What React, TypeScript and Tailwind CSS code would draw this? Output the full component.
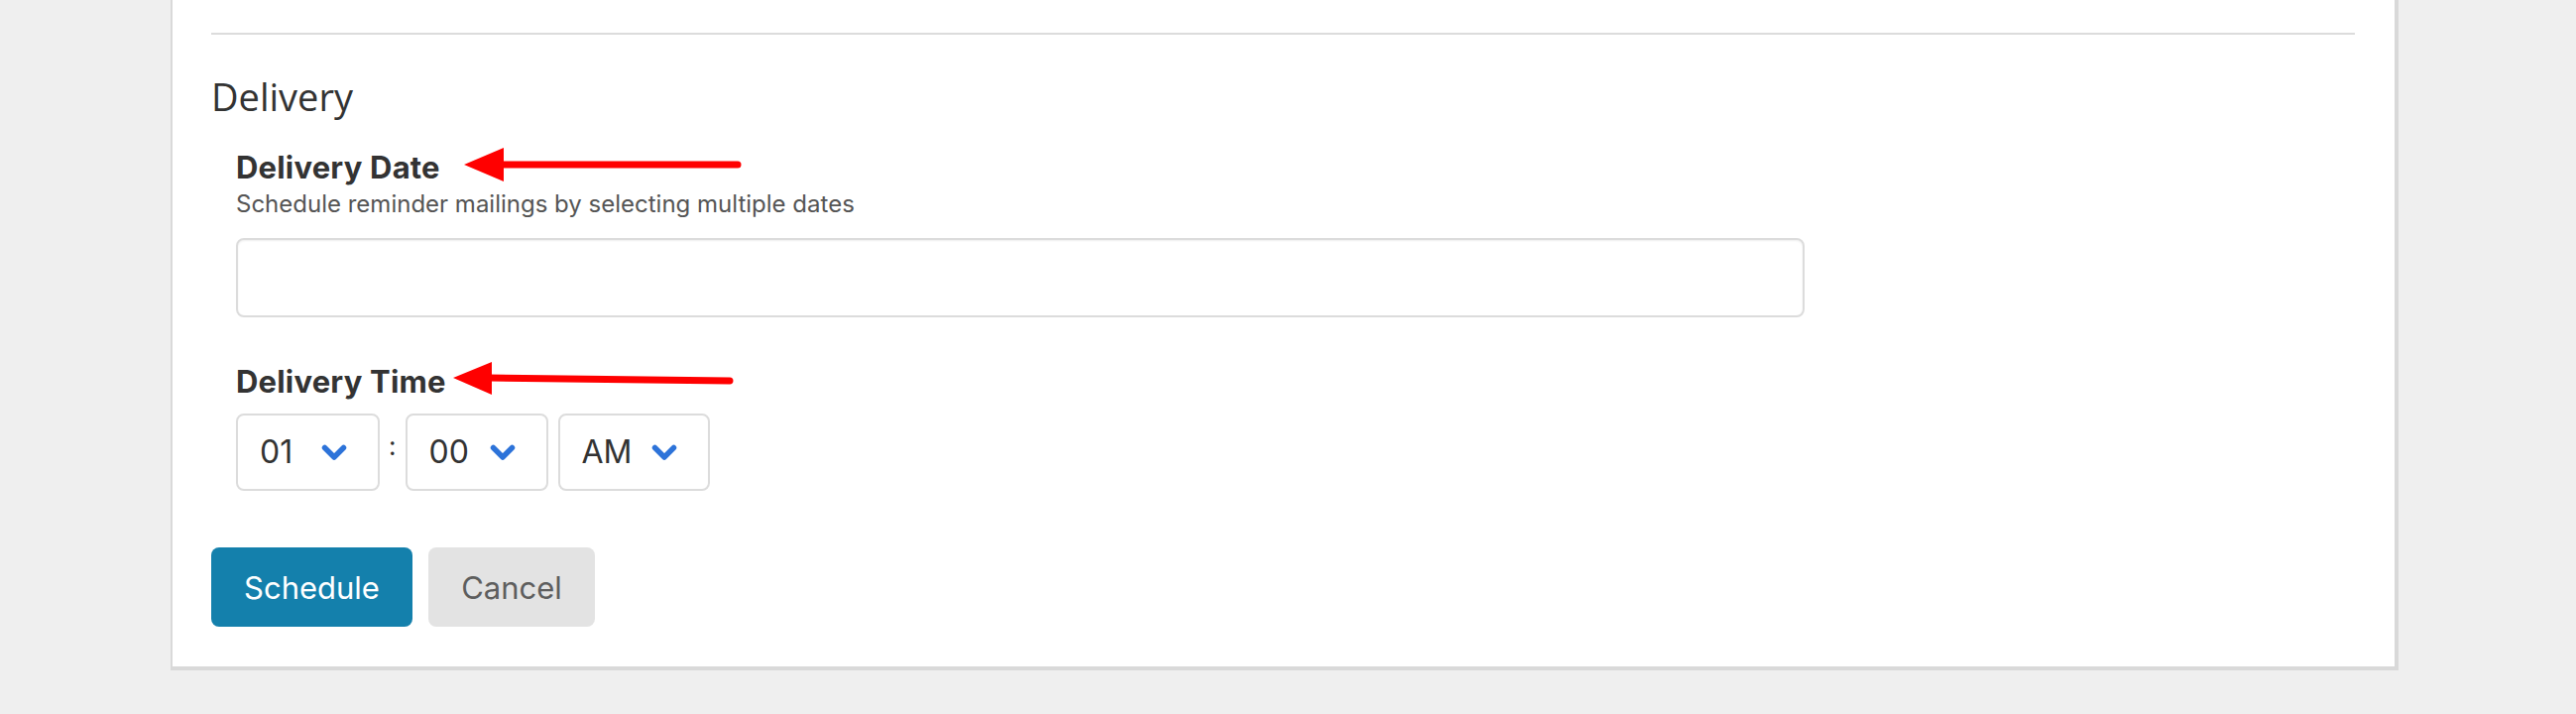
import React from "react";

const labelFont = { fontFamily: "Inter, 'Liberation Sans', sans-serif" };

function Chevron() {
  return (
    <svg width="26" height="17" viewBox="0 0 26 17" fill="none" className="shrink-0">
      <polyline
        points="3.5,3.5 13,13 22.5,3.5"
        stroke="#2d73d9"
        strokeWidth="5.5"
        strokeLinecap="round"
        strokeLinejoin="round"
      />
    </svg>
  );
}

function TimeSelect({ value, width }: { value: string; width: string }) {
  return (
    <div
      className={`flex h-[78px] items-center justify-between rounded-[8px] border-2 border-[#dcdcdc] bg-white pl-[22px] pr-[31px] text-[32px] leading-none text-[#333] ${width}`}
    >
      <span>{value}</span>
      <Chevron />
    </div>
  );
}

function Arrows() {
  return (
    <svg
      className="pointer-events-none absolute left-0 top-0"
      width="2598"
      height="720"
      viewBox="0 0 2598 720"
    >
      {/* delivery date arrow */}
      <line x1="505" y1="166" x2="744" y2="166" stroke="#ff0000" strokeWidth="7" strokeLinecap="round" />
      <polygon points="468,166 508,149 508,183" fill="#ff0000" />
      {/* delivery time arrow */}
      <line x1="493" y1="381" x2="736" y2="384" stroke="#ff0000" strokeWidth="7" strokeLinecap="round" />
      <polygon points="457,381 496,365 496,398" fill="#ff0000" />
    </svg>
  );
}

export default function App() {
  return (
    <div className="relative h-[720px] w-full overflow-hidden bg-[#efefef]" style={labelFont}>
      <div className="ml-[172px] w-[2247px] border-b-4 border-l-2 border-r-4 border-[#d9d9d9] bg-white pb-[40px] pl-[39px] pr-[40px] pt-[33px]">
        <div className="h-[2px] bg-[#dcdcdc]" />

        <h2
          className="mt-[43px] text-[38px] font-normal leading-[39px] text-[#333]"
          style={{ fontFamily: "'Open Sans', 'Noto Sans', sans-serif" }}
        >
          Delivery
        </h2>

        <div className="pl-[25px]">
          <div className="mt-[37px] text-[31px] font-bold leading-[30px] tracking-[0.2px] text-[#333]">
            Delivery Date
          </div>
          <div className="mt-[10px] text-[24px] leading-none text-[#555]">
            Schedule reminder mailings by selecting multiple dates
          </div>
          <div className="mt-[22px] h-[80px] w-[1582px] rounded-[8px] border-2 border-[#dcdcdc] bg-white shadow-[inset_0_1px_2px_rgba(0,0,0,0.07)]" />

          <div className="mt-[50px] text-[31px] font-bold leading-[30px] tracking-[0.2px] text-[#333]">
            Delivery Time
          </div>
          <div className="mt-[17px] flex items-start">
            <TimeSelect value="01" width="w-[145px]" />
            <span className="mx-[9px] mt-[20px] text-[26px] leading-none text-[#333]">:</span>
            <TimeSelect value="00" width="w-[144px]" />
            <div className="w-[10px]" />
            <TimeSelect value="AM" width="w-[153px]" />
          </div>
        </div>

        <div className="mt-[57px] flex gap-[16px]">
          <button className="flex h-[80px] w-[203px] items-center justify-center rounded-[8px] bg-[#1480ac] text-[31px] leading-none text-white">
            Schedule
          </button>
          <button className="flex h-[80px] w-[168px] items-center justify-center rounded-[8px] bg-[#e3e3e3] text-[31px] leading-none text-[#5e5e5e]">
            Cancel
          </button>
        </div>
      </div>

      <Arrows />
    </div>
  );
}
